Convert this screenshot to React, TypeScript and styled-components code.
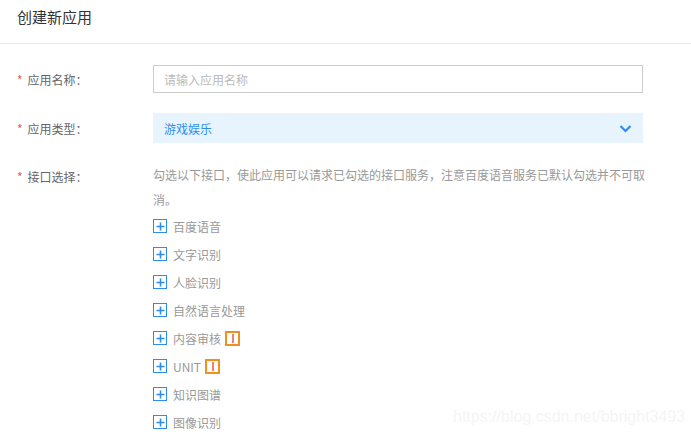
import React from "react";
import styled, { createGlobalStyle } from "styled-components";

const GlobalStyle = createGlobalStyle`
  html, body {
    margin: 0;
    padding: 0;
    background: #fff;
    font-family: "Noto Sans CJK SC", "Liberation Sans", sans-serif;
  }
`;

const Page = styled.div`
  position: relative;
  width: 691px;
  height: 437px;
  overflow: hidden;
  background: #fff;
`;

const Header = styled.div`
  height: 44px;
  box-sizing: border-box;
  padding: 7px 0 0 17px;
  line-height: 20px;
  border-bottom: 1px solid #e8e8e8;
  font-size: 15px;
  color: #333;
`;

const Form = styled.div`
  padding: 21px 0 0 0;
  display: flex;
  flex-direction: column;
`;

const Row = styled.div<{ $gap: number }>`
  display: flex;
  align-items: flex-start;
  margin-bottom: ${(p) => p.$gap}px;
`;

const Label = styled.div<{ $h: number }>`
  width: 153px;
  height: ${(p) => p.$h}px;
  padding-left: 17px;
  box-sizing: border-box;
  display: flex;
  align-items: center;
  font-size: 12px;
  color: #666;
`;

const Star = styled.span`
  color: #f25555;
  margin-right: 5px;
  font-size: 12px;
`;

const Input = styled.input`
  width: 490px;
  height: 28px;
  box-sizing: border-box;
  border: 1px solid #ccc;
  padding: 0 10px;
  font-size: 12px;
  font-family: inherit;
  outline: none;
  &::placeholder {
    color: #bbb;
  }
`;

const Select = styled.div`
  width: 490px;
  height: 30px;
  background: #e8f4fd;
  display: flex;
  align-items: center;
  justify-content: space-between;
  padding: 0 11px;
  box-sizing: border-box;
  font-size: 12px;
  color: #2d8cf0;
`;

const Content = styled.div`
  width: 500px;
  margin-top: 1px;
`;

const Desc = styled.div`
  font-size: 12px;
  line-height: 25px;
  color: #999;
`;

const Item = styled.div`
  height: 28px;
  display: flex;
  align-items: center;
  font-size: 12px;
  color: #999;
`;

const PlusBox = styled.span`
  width: 14px;
  height: 14px;
  box-sizing: border-box;
  border: 1.5px solid #2d8cf0;
  margin-right: 6px;
  display: inline-flex;
  align-items: center;
  justify-content: center;
`;

const Badge = styled.span`
  width: 15px;
  height: 15px;
  box-sizing: border-box;
  border: 2px solid #f0901e;
  margin-left: 4px;
  display: inline-flex;
  align-items: center;
  justify-content: center;
  &::after {
    content: "";
    width: 2px;
    height: 9px;
    background: #f28070;
  }
`;

const Watermark = styled.div`
  position: absolute;
  left: 453px;
  top: 408px;
  font-family: "Liberation Sans", Arial, sans-serif;
  font-size: 16px;
  color: #f5f5f5;
  pointer-events: none;
`;

const Plus = () => (
  <PlusBox>
    <svg width="9" height="9" viewBox="0 0 9 9">
      <path d="M4.5 0.5v8M0.5 4.5h8" stroke="#2d8cf0" strokeWidth="1.6" />
    </svg>
  </PlusBox>
);

const apis: { name: string; badge?: boolean }[] = [
  { name: "百度语音" },
  { name: "文字识别" },
  { name: "人脸识别" },
  { name: "自然语言处理" },
  { name: "内容审核", badge: true },
  { name: "UNIT", badge: true },
  { name: "知识图谱" },
  { name: "图像识别" },
];

export default function App() {
  return (
    <Page>
      <GlobalStyle />
      <Header>创建新应用</Header>
      <Form>
        <Row $gap={20}>
          <Label $h={28}>
            <Star>*</Star>应用名称：
          </Label>
          <Input placeholder="请输入应用名称" />
        </Row>
        <Row $gap={18}>
          <Label $h={30}>
            <Star>*</Star>应用类型：
          </Label>
          <Select>
            游戏娱乐
            <svg width="13" height="9" viewBox="0 0 13 9">
              <polyline points="1.5,2 6.5,7 11.5,2" fill="none" stroke="#2d8cf0" strokeWidth="2.2" />
            </svg>
          </Select>
        </Row>
        <Row $gap={0}>
          <Label $h={30}>
            <Star>*</Star>接口选择：
          </Label>
          <Content>
            <Desc>勾选以下接口，使此应用可以请求已勾选的接口服务，注意百度语音服务已默认勾选并不可取消。</Desc>
            {apis.map((a) => (
              <Item key={a.name}>
                <Plus />
                {a.name}
                {a.badge && <Badge />}
              </Item>
            ))}
          </Content>
        </Row>
      </Form>
      <Watermark>https://blog.csdn.net/bbright3493</Watermark>
    </Page>
  );
}
